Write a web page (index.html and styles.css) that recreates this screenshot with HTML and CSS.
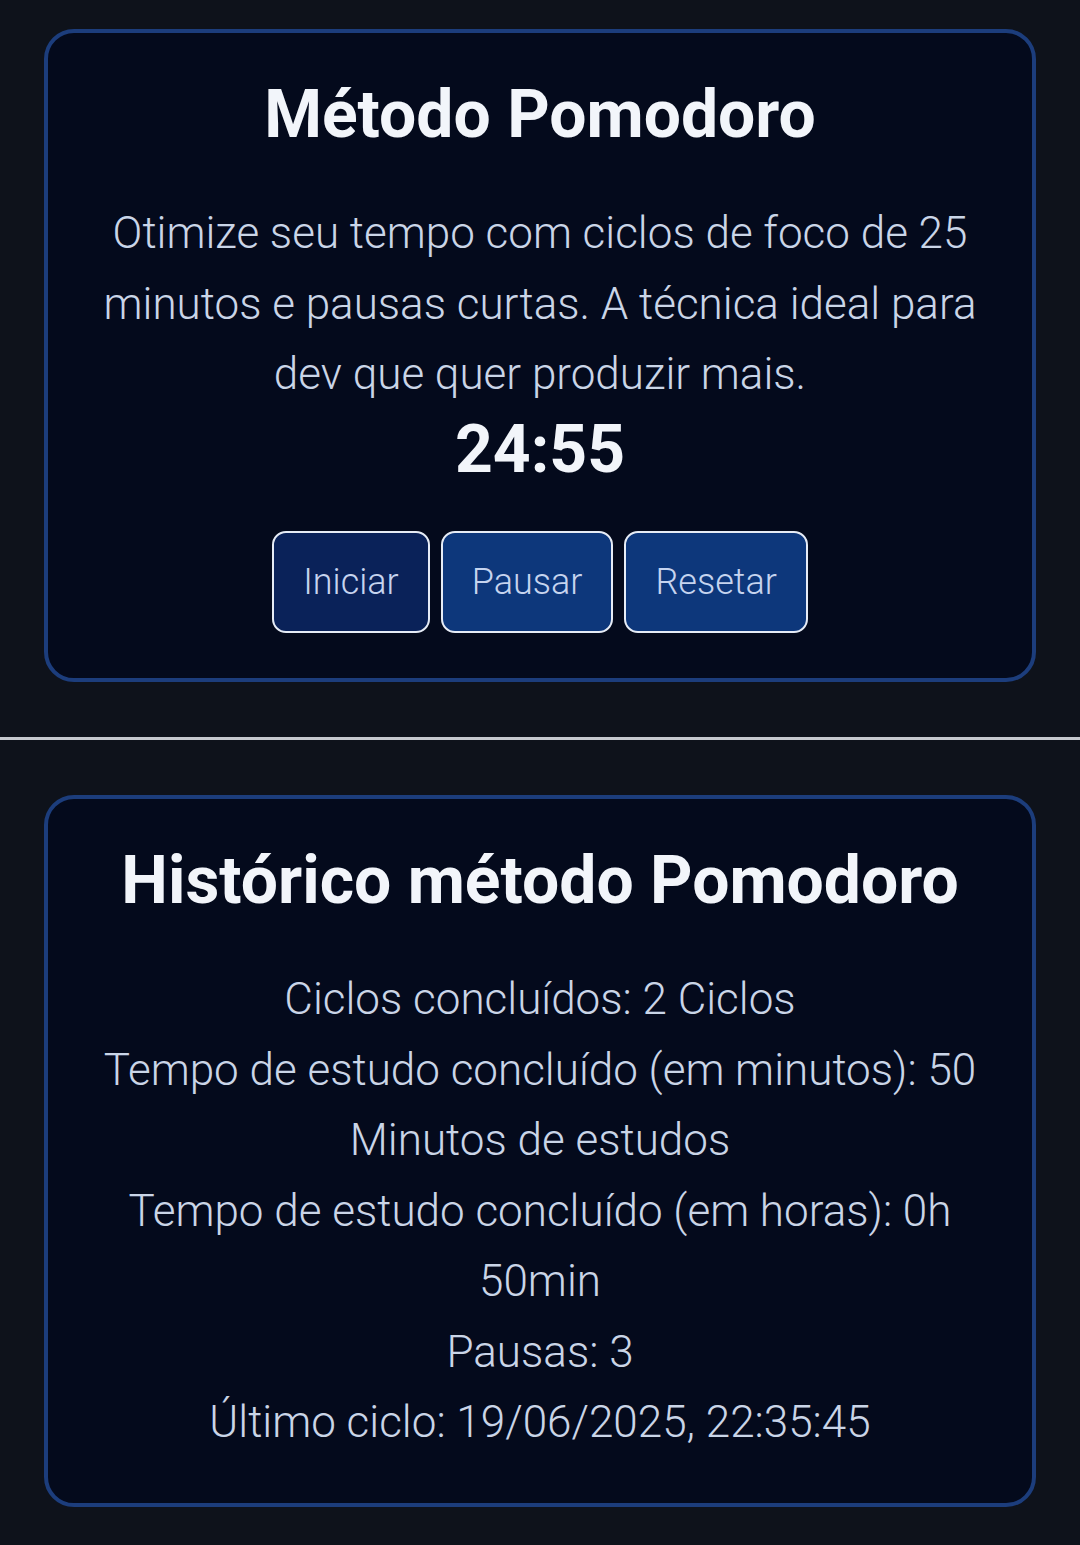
FILE: index.html
```html
<!DOCTYPE html>
<html lang="pt-BR">
<head>
<meta charset="utf-8">
<title>Método Pomodoro</title>
<link rel="stylesheet" href="styles.css">
</head>
<body>
  <section class="card card-timer">
    <h1 class="card-title">Método Pomodoro</h1>
    <p class="card-text">Otimize seu tempo com ciclos de foco de 25 minutos e pausas curtas. A técnica ideal para dev que quer produzir mais.</p>
    <div class="timer">24:55</div>
    <div class="actions">
      <button class="btn btn-start">Iniciar</button>
      <button class="btn">Pausar</button>
      <button class="btn">Resetar</button>
    </div>
  </section>

  <hr class="divider">

  <section class="card card-history">
    <h2 class="card-title">Histórico método Pomodoro</h2>
    <div class="history">
      <p class="history-line">Ciclos concluídos: 2 Ciclos</p>
      <p class="history-line">Tempo de estudo concluído (em minutos): 50 Minutos de estudos</p>
      <p class="history-line">Tempo de estudo concluído (em horas): 0h 50min</p>
      <p class="history-line">Pausas: 3</p>
      <p class="history-line">Último ciclo: 19/06/2025, 22:35:45</p>
    </div>
  </section>
</body>
</html>
```

FILE: styles.css
```css
html, body {
  margin: 0;
  padding: 0;
}

body {
  background: #0e121b;
  font-family: Roboto, "Liberation Sans", sans-serif;
  color: #f2f5fa;
  padding-top: 29px;
}

.card {
  margin: 0 44px;
  background: #040a1c;
  border: 4px solid #1c3d7c;
  border-radius: 30px;
  padding: 42px 40px 45px;
  text-align: center;
}

.card-title {
  margin: 0;
  font-size: 66px;
  line-height: 1.2;
  font-weight: 700;
  color: #f2f5fa;
}

.card-text {
  margin: 44px 0 0;
  font-size: 44px;
  line-height: 70.5px;
  font-weight: 300;
  color: #cad5e7;
}

.timer {
  font-size: 66px;
  line-height: 1.2;
  font-weight: 700;
  color: #f2f5fa;
}

.actions {
  margin-top: 42px;
  display: flex;
  justify-content: center;
  gap: 11px;
}

.btn {
  height: 102px;
  padding: 0 29px;
  border: 2px solid #e6ecf6;
  border-radius: 14px;
  background: #0d377b;
  color: #c6d4ef;
  font-family: Roboto, "Liberation Sans", sans-serif;
  font-size: 36px;
  font-weight: 300;
  display: inline-flex;
  align-items: center;
  justify-content: center;
}

.btn-start {
  background: #0a2259;
}

.divider {
  margin: 55px 0;
  border: 0;
  height: 3px;
  background: #c6c9cf;
}

.history {
  margin-top: 44px;
}

.history-line {
  margin: 0;
  font-size: 44px;
  line-height: 70.5px;
  font-weight: 300;
  color: #cad5e7;
}

.card-history {
  padding-bottom: 45px;
}
```
